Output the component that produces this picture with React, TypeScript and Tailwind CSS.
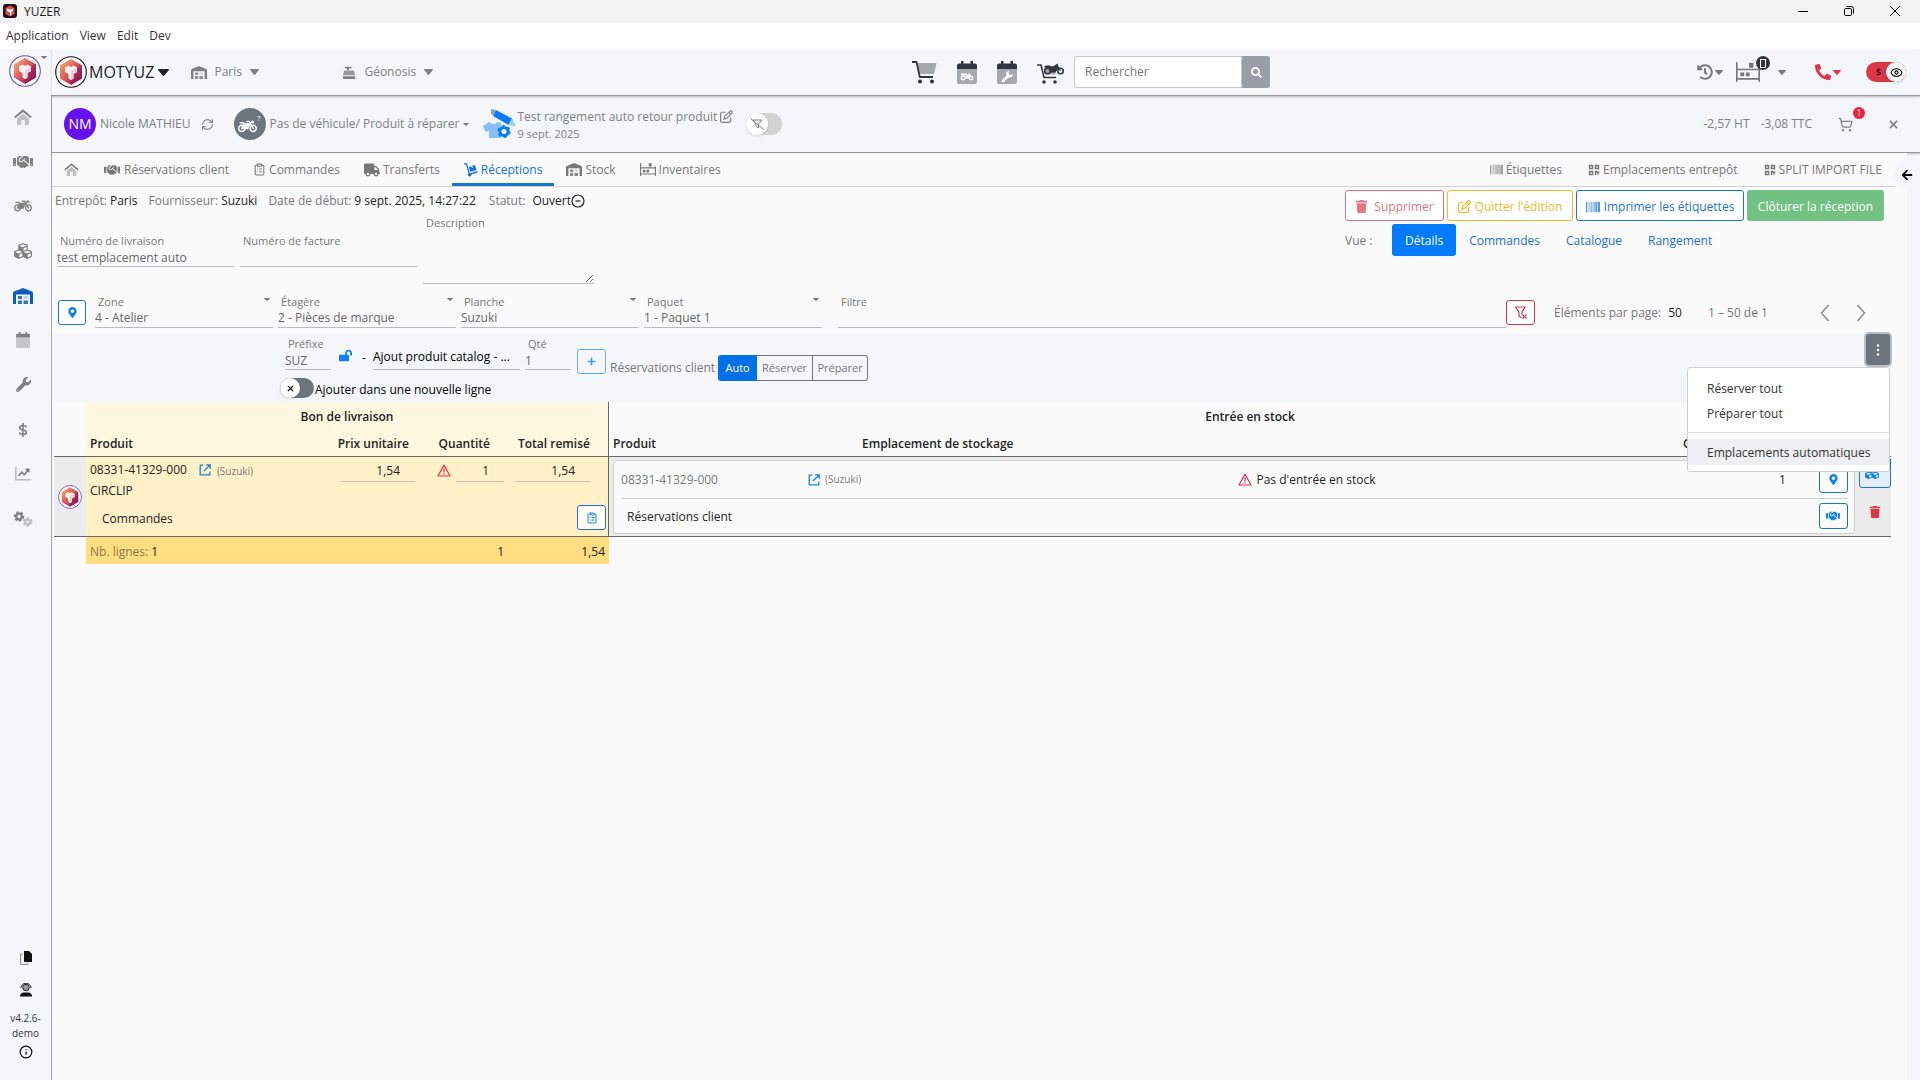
import type { ReactNode } from "react";
import {
  FaArrowLeft,
  FaBarcode,
  FaCubes,
  FaHandshake,
  FaHistory,
  FaLockOpen,
  FaMapMarkerAlt,
  FaMotorcycle,
  FaPhone,
  FaPlus,
  FaQrcode,
  FaSearch,
  FaTrash,
  FaTruck,
  FaWrench,
} from "react-icons/fa";
import { LuClipboardList, LuEye, LuInfo, LuRefreshCw, LuShoppingCart } from "react-icons/lu";
import { FaRegPenToSquare } from "react-icons/fa6";

type IconProps = { className?: string };

function Caret({ className = "w-[9px] h-[6px]" }: IconProps) {
  return (
    <svg viewBox="0 0 10 6" className={className} fill="currentColor" preserveAspectRatio="none" aria-hidden="true">
      <path d="M0.6 0h8.8c.5 0 .8.6.4 1L5.5 5.7a.7.7 0 0 1-1 0L.2 1C-.2.6.1 0 .6 0z" />
    </svg>
  );
}

function Logo({ className, ring = "#111" }: IconProps & { ring?: string }) {
  return (
    <svg viewBox="0 0 32 32" className={className} aria-hidden="true">
      <defs>
        <linearGradient id="logo-fill" x1="0.1" y1="0.1" x2="0.9" y2="0.9">
          <stop offset="0" stopColor="#f2a36b" />
          <stop offset="0.45" stopColor="#dd5a5c" />
          <stop offset="1" stopColor="#8a0f52" />
        </linearGradient>
      </defs>
      <circle cx="16" cy="16" r="15.3" fill="#fff" stroke={ring} strokeWidth="1.1" />
      <path d="M16 3l11 6.2v13.4L16 29 5 22.600V9.200z" fill="url(#logo-fill)" />
      <path d="M16 16l11-6.800v13.400L16 29z" fill="#8f1457" opacity="0.4" />
      <path d="M10 11.500l3.500-2L16 11l2.500-1.500 3.500 2v4.500l-3.500 2v4.500L16 24l-2.500-1.500V18L10 16z" fill="#fdf3f1" />
      <path d="M16 15l6-3.500v4.500l-3.500 2v4.500L16 24z" fill="#e6d3d9" />
    </svg>
  );
}

function HomeIcon({ className }: IconProps) {
  return (
    <svg viewBox="0 0 18 16" className={className} fill="currentColor" aria-hidden="true">
      <path d="M9 4.500L3 9.600V15c0 .6.300 1 .9 1h3.300v-5h3.600v5h3.300c.6 0 .9-.4.9-1V9.600z" opacity="0.45" />
      <path d="M9 0.300L.2 7.800l1.200 1.400L9 2.900l7.600 6.300 1.200-1.400z" />
    </svg>
  );
}

function WarehouseIcon({ className }: IconProps) {
  return (
    <svg viewBox="0 0 20 16" className={className} fill="currentColor" aria-hidden="true">
      <path d="M10 0L1 3.600C.4 3.900 0 4.400 0 5v11h3V6.500h14V16h3V5c0-.6-.4-1.100-1-1.400z" />
      <path d="M5 8h4v3H5zM5 12.500h4V16H5zM10.500 12.500h4.500V16h-4.500z" opacity="0.85" />
      <path d="M10.500 8H15v3h-4.500z" opacity="0.25" />
    </svg>
  );
}

function CalendarIcon({ className, children }: IconProps & { children?: ReactNode }) {
  return (
    <svg viewBox="0 0 20 23" className={className} fill="currentColor" aria-hidden="true">
      <path d="M0 8h20v13a2 2 0 0 1-2 2H2a2 2 0 0 1-2-2z" opacity="0.4" />
      <path d="M4 0h2.500v2.500h7V0H16v2.500h2a2 2 0 0 1 2 2V8H0V4.500a2 2 0 0 1 2-2h2z" />
      {children}
    </svg>
  );
}

function CartIcon({ className }: IconProps) {
  return (
    <svg viewBox="0 0 25 23" className={className} fill="currentColor" aria-hidden="true">
      <path d="M5 2h19.500l-2 9.500a2 2 0 0 1-2 1.500H7.200z" opacity="0.4" />
      <path d="M0 1h4.500l3.300 15H21" fill="none" stroke="currentColor" strokeWidth="1.800" strokeLinejoin="round" />
      <circle cx="8" cy="20.500" r="2" />
      <circle cx="20" cy="20.500" r="2" />
    </svg>
  );
}

function MotoCartIcon({ className }: IconProps) {
  return (
    <svg viewBox="0 0 27 23" className={className} fill="currentColor" aria-hidden="true">
      <path d="M0 4h4l3 12.500h12" fill="none" stroke="currentColor" strokeWidth="1.600" />
      <path d="M7 5h13l-2 8.500H8z" opacity="0.4" />
      <circle cx="10.500" cy="10" r="2.800" fill="none" stroke="currentColor" strokeWidth="1.600" />
      <circle cx="23.500" cy="10" r="2.800" fill="none" stroke="currentColor" strokeWidth="1.600" />
      <path d="M7.500 5l4-.8 4 1.500 3-2 2.500-1.200v2l3 5-1 .5-2-2.500-2.500 4H13L12 7.500 8 6.500z" />
      <circle cx="7" cy="21" r="1.800" />
      <circle cx="18" cy="21" r="1.800" />
    </svg>
  );
}

function RegisterIcon({ className }: IconProps) {
  return (
    <svg viewBox="0 0 16 16" className={className} fill="currentColor" aria-hidden="true">
      <path d="M3 1h8v2H8v2H5.500V3H3z" />
      <path d="M2 5.500h12l1.500 6H.5z" opacity="0.8" />
      <path d="M.5 12.500h15V15a1 1 0 0 1-1 1h-13a1 1 0 0 1-1-1z" />
    </svg>
  );
}

function ShelfIcon({ className }: IconProps) {
  return (
    <svg viewBox="0 0 22 18" className={className} fill="currentColor" aria-hidden="true">
      <path d="M0 0h1.500v18H0zM20.500 5H22v13h-1.500z" />
      <path d="M0 6h22v1.500H0zM0 14.500h22V16H0z" />
      <path d="M4 9.500h3.500V13H4zM9 9.500h3.500V13H9zM12 .500h4V5h-4z" />
    </svg>
  );
}

function DollyIcon({ className }: IconProps) {
  return (
    <svg viewBox="0 0 16 16" className={className} fill="currentColor" aria-hidden="true">
      <path d="M0 1h3l3 11" fill="none" stroke="currentColor" strokeWidth="1.500" />
      <path d="M7.500 12.500l8-2.500" fill="none" stroke="currentColor" strokeWidth="1.500" />
      <path d="M5.500 4.500l2.800-.9.700 2.200 1.200-.4-.6-2.200L12.300 2l2 6L7.300 10z" />
      <circle cx="6.500" cy="13.500" r="2" />
    </svg>
  );
}

function ShirtIcon({ className }: IconProps) {
  return (
    <svg viewBox="0 0 34 30" className={className} aria-hidden="true">
      <path d="M6 13l-6 4 2.500 6 3.500-1.500V29h12V14l-3-1c-2 2.500-6 2.500-9 0z" fill="#86bdfb" />
      <path d="M8 0l5 1-3 5.500L8 5z" fill="#8fa0b5" />
      <path d="M13 1l16 8.500-3.500 6.500-15.500-9z" fill="#0a7bff" />
      <path d="M29 9.500l4 8-7-1.500z" fill="#9bc9fd" />
      <circle cx="21" cy="22.500" r="4" fill="#fff" stroke="#0a7bff" strokeWidth="3" />
      <circle cx="21" cy="22.500" r="5.600" fill="none" stroke="#0a7bff" strokeWidth="2" strokeDasharray="2.930 2.930" />
    </svg>
  );
}

function ExternalIcon({ className }: IconProps) {
  return (
    <svg viewBox="0 0 12 12" className={className} fill="none" stroke="currentColor" strokeWidth="1.300" aria-hidden="true">
      <path d="M4.500 1.200H1.200v9.600h9.600V7.500M7 .8h4.200V5M11 1L5 7" />
    </svg>
  );
}

function WarningIcon({ className }: IconProps) {
  return (
    <svg viewBox="0 0 14 13" className={className} fill="none" stroke="#dc3545" strokeWidth="1.200" aria-hidden="true">
      <path d="M7 1.100L13 12H1z" strokeLinejoin="round" />
      <path d="M7 4.500v4M7 9.500v1.200" />
    </svg>
  );
}

function ChartIcon({ className }: IconProps) {
  return (
    <svg viewBox="0 0 16 14" className={className} fill="none" stroke="currentColor" aria-hidden="true">
      <path d="M.8 0v12.700H16" strokeWidth="1.500" opacity="0.5" />
      <path d="M3.500 9l3.300-4 2.400 2.700L13 3M10.500 2.300h3.200v3" strokeWidth="1.700" />
    </svg>
  );
}

function Gear({ cx, cy, r, opacity }: { cx: number; cy: number; r: number; opacity: number }) {
  return (
    <g fill="none" stroke="currentColor" opacity={opacity}>
      <circle cx={cx} cy={cy} r={r} strokeWidth="2.400" />
      <circle cx={cx} cy={cy} r={r + 1.500} strokeWidth="1.800" strokeDasharray="2.200 2.200" />
    </g>
  );
}

function GearsIcon({ className }: IconProps) {
  return (
    <svg viewBox="0 0 20 16" className={className} aria-hidden="true">
      <Gear cx={6} cy={5.500} r={2.900} opacity={1} />
      <Gear cx={14.500} cy={11} r={2.500} opacity={0.45} />
    </svg>
  );
}

function FilterOffIcon({ className }: IconProps) {
  return (
    <svg viewBox="0 0 14 14" className={className} fill="none" stroke="currentColor" strokeWidth="1.200" aria-hidden="true">
      <path d="M1.500 1H11L8 6v2.500M7.500 12L5 10V6L1.500 1M8.500 8.500l4 4M12.500 8.500l-4 4" />
    </svg>
  );
}

const sideLinks: { label: string; icon: ReactNode; active?: boolean }[] = [
  { label: "Accueil", icon: <HomeIcon className="w-[18px] h-4" /> },
  { label: "Clients", icon: <FaHandshake className="size-5" /> },
  { label: "Véhicules", icon: <FaMotorcycle className="size-[18px]" /> },
  { label: "Produits", icon: <FaCubes className="size-[18px]" /> },
  { label: "Entrepôt", icon: <WarehouseIcon className="w-5 h-4" />, active: true },
  { label: "Agenda", icon: <CalendarIcon className="w-[14px] h-4" /> },
  { label: "Atelier", icon: <FaWrench className="size-[15px]" /> },
  {
    label: "Comptabilité",
    icon: (
      <svg viewBox="0 0 10 16" className="w-[10px] h-[14px]" fill="none" stroke="currentColor" strokeWidth="1.800" aria-hidden="true">
        <path d="M5 0v16M9 5C8.500 3.500 7 2.800 5 2.800S1.300 3.700 1.300 5.300 2.800 7.600 5 8s3.900 1 3.900 2.700S7 13.200 5 13.200 1.300 12.300 1 10.700" />
      </svg>
    ),
  },
  { label: "Statistiques", icon: <ChartIcon className="w-4 h-[14px]" /> },
  { label: "Paramètres", icon: <GearsIcon className="w-5 h-4" /> },
];

function TitleBar() {
  return (
    <header>
      <div className="flex h-[23px] items-center bg-[#f3f3f3] pb-[2px] pl-[3px] pr-[19px] text-[#1b1b1b]">
        <svg viewBox="0 0 14 14" className="size-[14px]" aria-hidden="true">
          <rect width="14" height="14" rx="3" fill="#221022" />
          <path d="M7 1.500l4.500 2.600v5.800L7 12.500 2.500 9.900V4.100z" fill="#e0503f" />
          <path d="M4 4.500l3 1.200 3-1.200v2.300L8.300 8v3L7 11.700V8.500L4 6.800z" fill="#fff" />
        </svg>
        <span className="ml-[7px] pt-[2px] text-xs">YUZER</span>
        <div className="ml-auto flex items-center gap-[34px] text-black">
          <button type="button" aria-label="Réduire">
            <svg viewBox="0 0 12 12" className="size-3" stroke="currentColor" fill="none">
              <path d="M1 6.500h10" />
            </svg>
          </button>
          <button type="button" aria-label="Restaurer">
            <svg viewBox="0 0 12 12" className="size-3" stroke="currentColor" fill="none">
              <rect x="1.500" y="3.500" width="7" height="7" rx="1" />
              <path d="M3.500 1.500h5a2 2 0 0 1 2 2v5" />
            </svg>
          </button>
          <button type="button" aria-label="Fermer">
            <svg viewBox="0 0 12 12" className="size-3" stroke="currentColor" fill="none">
              <path d="M1 1l10 10M11 1L1 11" />
            </svg>
          </button>
        </div>
      </div>
      <nav className="flex h-[26px] items-center gap-[11px] bg-white pl-[6px] text-xs text-[#333]">
        <button type="button">Application</button>
        <button type="button">View</button>
        <button type="button">Edit</button>
        <button type="button">Dev</button>
      </nav>
    </header>
  );
}

function Sidebar() {
  return (
    <aside className="flex w-[52px] shrink-0 flex-col">
      <div className="flex h-[46px] pl-[9px] pt-[6px]">
        <button type="button" aria-label="Compte" className="flex items-start">
          <Logo className="size-8" ring="#6a4bb5" />
          <Caret className="w-[6px] h-[3px] mt-px text-[#777]" />
        </button>
      </div>
      <div className="flex flex-1 flex-col justify-between border-r border-[#a8a8a8]">
        <nav className="flex h-[440px] flex-col justify-between pr-[5px] pt-[6px] text-[#808080]">
          {sideLinks.map((link) => (
            <a
              key={link.label}
              href="#"
              aria-label={link.label}
              className={link.active ? "flex h-8 items-center justify-center text-[#0a5cc0]" : "flex h-8 items-center justify-center"}
            >
              {link.icon}
            </a>
          ))}
        </nav>
        <div className="flex flex-col items-center pb-[21px] text-center text-[10px] leading-[15px] text-[#333]">
          <svg viewBox="0 0 12 14" className="w-3 h-[14px] mb-[18px]" aria-hidden="true">
            <path d="M3 3H.6v10.400h7.200V12" fill="none" stroke="#888" />
            <path d="M4 0h5l3 3v8H4z" fill="#111" />
          </svg>
          <svg viewBox="0 0 12 14" className="w-3 h-[14px] mb-[14px]" aria-hidden="true">
            <circle cx="6" cy="4.500" r="3.300" fill="#999" stroke="#222" />
            <path d="M1 5a5 4.800 0 0 1 10 0" fill="none" stroke="#222" />
            <path d="M0 13.500c0-3 2-4 3.500-4h5c1.500 0 3.500 1 3.500 4z" fill="#111" />
          </svg>
          <span>
            v4.2.6-
            <br />
            demo
          </span>
          <LuInfo className="size-[14px] mt-1 text-black" />
        </div>
      </div>
    </aside>
  );
}

function TopBar() {
  return (
    <div className="flex h-[47px] items-center border-b border-[#999] pl-[3px] pr-[14px] shadow-[0_1px_2px_rgba(0,0,0,0.25)]">
      <button type="button" className="flex items-center text-[#222]">
        <Logo className="size-8" />
        <span className="ml-[2px] text-base">MOTYUZ</span>
        <Caret className="w-[11px] h-[7px] ml-1" />
      </button>
      <button type="button" className="ml-[22px] flex w-[151px] items-center text-xs text-[#808080]">
        <WarehouseIcon className="w-4 h-[13px]" />
        <span className="ml-[7px] mr-2">Paris</span>
        <Caret />
      </button>
      <button type="button" className="flex items-center text-xs text-[#808080]">
        <RegisterIcon className="w-[14px] h-[13px]" />
        <span className="ml-2 mr-2">Géonosis</span>
        <Caret />
      </button>

      <div className="ml-auto flex items-center gap-5 pl-[52px] text-[#2f3640]">
        <button type="button" aria-label="Ventes">
          <CartIcon className="w-[25px] h-[23px]" />
        </button>
        <button type="button" aria-label="Agenda véhicules">
          <CalendarIcon className="w-5 h-[23px]">
            <g fill="none" stroke="#fff" strokeWidth="1.300">
              <circle cx="6" cy="17" r="1.800" />
              <circle cx="14" cy="17" r="1.800" />
              <path d="M4 13.500h5l2 2h2l-1-3M7 16.500h5" strokeWidth="2" />
            </g>
          </CalendarIcon>
        </button>
        <button type="button" aria-label="Agenda atelier">
          <CalendarIcon className="w-5 h-[23px]">
            <path d="M6 20l5-5" stroke="#fff" strokeWidth="2.600" strokeLinecap="round" />
            <path d="M15.800 13a3.300 3.300 0 1 1-3.500-3L11.500 12l.5 1.500 1.500.5z" fill="#fff" />
          </CalendarIcon>
        </button>
        <button type="button" aria-label="Vente véhicule">
          <MotoCartIcon className="w-[27px] h-[23px]" />
        </button>
      </div>
      <form className="ml-[10px] flex h-8 w-[196px]">
        <input
          type="search"
          aria-label="Rechercher"
          placeholder="Rechercher"
          className="w-full min-w-0 rounded-l-[3px] border border-[#c4c8cc] bg-white px-[10px] text-xs placeholder:text-[#777]"
        />
        <button type="button" aria-label="Lancer la recherche" className="flex w-7 shrink-0 items-center justify-center rounded-r-[3px] bg-[#999ea6] text-white">
          <FaSearch className="size-[11px]" />
        </button>
      </form>

      <div className="ml-auto flex items-center text-[#777]">
        <button type="button" aria-label="Historique" className="flex items-center gap-[2px]">
          <FaHistory className="size-4" />
          <Caret className="w-2 h-[5px]" />
        </button>
        <button type="button" aria-label="Emplacements" className="relative ml-[13px] flex items-center gap-[18px]">
          <ShelfIcon className="w-6 h-5" />
          <span className="absolute left-5 -top-[6px] flex size-[14px] items-center justify-center rounded-full bg-[#2f3640]">
            <span className="h-[9px] w-[6px] border border-white" />
          </span>
          <Caret className="w-2 h-[5px]" />
        </button>
        <button type="button" aria-label="Appels" className="ml-[29px] flex items-center gap-[2px] text-[#dc3545]">
          <FaPhone className="size-4 -scale-x-100" />
          <Caret className="w-2 h-[5px]" />
        </button>
        <button type="button" aria-label="Afficher les prix" className="ml-[25px] flex h-5 w-10 items-center justify-between rounded-full bg-[#dc3545] pl-[10px] text-[9px] text-black">
          $
          <span className="flex size-5 items-center justify-center rounded-full bg-white shadow">
            <LuEye className="size-[13px]" />
          </span>
        </button>
      </div>
    </div>
  );
}

function ContextBar() {
  return (
    <div className="flex h-[57px] items-center border-b border-[#999] pl-3 pr-[22px] text-xs text-[#808080] shadow-[0_1px_2px_rgba(0,0,0,0.25)]">
      <span className="flex size-8 items-center justify-center rounded-full bg-[#6610f2] text-sm text-white">NM</span>
      <span className="ml-1">Nicole MATHIEU</span>
      <button type="button" aria-label="Actualiser" className="ml-[10px]">
        <LuRefreshCw className="size-[13px]" />
      </button>
      <button type="button" className="ml-5 flex items-center">
        <span className="relative flex size-8 items-center justify-center rounded-full bg-[#6c757d] pr-1 pt-1 text-white">
          <FaMotorcycle className="size-[19px]" />
          <span className="absolute right-[5px] top-1 text-[8px] leading-3">?</span>
        </span>
        <span className="ml-1 mr-1">Pas de véhicule/ Produit à réparer</span>
        <Caret className="w-[6px] h-[3px]" />
      </button>
      <ShirtIcon className="ml-[14px] w-[34px] h-[30px]" />
      <div className="pt-px leading-[17px]">
        <div className="flex items-center gap-[3px]">
          Test rangement auto retour produit
          <FaRegPenToSquare className="size-[13px]" />
        </div>
        <div className="text-[11px]">9 sept. 2025</div>
      </div>
      <button type="button" aria-label="Filtrer" className="ml-[13px] flex h-[22px] w-9 items-center rounded-full bg-[#d2d2d2]">
        <span className="flex size-[22px] items-center justify-center rounded-full bg-white shadow">
          <svg viewBox="0 0 14 12" className="w-[14px] h-3" fill="none" stroke="currentColor" aria-hidden="true">
            <path d="M3 2h9L8.500 6v4L6 8V6L3 2M.5.500l13 11" />
          </svg>
        </span>
      </button>
      <span className="ml-auto">-2,57 HT</span>
      <span className="ml-[11px]">-3,08 TTC</span>
      <button type="button" aria-label="Panier" className="relative ml-[26px]">
        <LuShoppingCart className="size-[15px]" />
        <span className="absolute -right-3 -top-[10px] flex size-3 items-center justify-center rounded-full bg-[#f02040] text-[9px] text-white">1</span>
      </button>
      <button type="button" aria-label="Fermer" className="ml-9">
        <svg viewBox="0 0 10 10" className="size-[9px]" stroke="currentColor" strokeWidth="1.800">
          <path d="M1 1l8 8M9 1L1 9" />
        </svg>
      </button>
    </div>
  );
}

const tabs: { label: string; icon: ReactNode; active?: boolean }[] = [
  { label: "Réservations client", icon: <FaHandshake className="size-4 mr-px" /> },
  { label: "Commandes", icon: <LuClipboardList className="size-[13px]" /> },
  { label: "Transferts", icon: <FaTruck className="size-4" /> },
  { label: "Réceptions", icon: <DollyIcon className="size-[14px]" />, active: true },
  { label: "Stock", icon: <WarehouseIcon className="w-4 h-[13px]" /> },
  { label: "Inventaires", icon: <ShelfIcon className="w-4 h-[13px]" /> },
];

const toolLinks = [
  { label: "Étiquettes", icon: <FaBarcode className="size-[13px]" /> },
  { label: "Emplacements entrepôt", icon: <FaQrcode className="size-3" /> },
  { label: "SPLIT IMPORT FILE", icon: <FaQrcode className="size-3" /> },
];

function Tabs() {
  return (
    <nav className="mr-3 flex h-[34px] border-b border-[#d0d3d6] text-xs text-[#777]">
      <a href="#" aria-label="Accueil" className="flex items-center pl-3 pr-[13px]">
        <HomeIcon className="w-[15px] h-[13px]" />
      </a>
      {tabs.map((tab) => (
        <a
          key={tab.label}
          href="#"
          className={
            tab.active
              ? "flex items-center gap-[3px] border-b-[3px] border-[#1976d2] px-3 pt-[3px] text-[#1070e0]"
              : "flex items-center gap-[3px] px-3"
          }
        >
          {tab.icon}
          {tab.label}
        </a>
      ))}
      <div className="ml-auto flex">
        {toolLinks.map((link) => (
          <a key={link.label} href="#" className="flex items-center gap-[3px] px-[13px]">
            {link.icon}
            {link.label}
          </a>
        ))}
      </div>
    </nav>
  );
}

const fieldLine = "block h-[18px] w-full border-b border-[#b9bcc0] bg-transparent pb-px text-xs text-[#666]";

function TextField({ id, label, value, className }: { id: string; label: string; value?: string; className: string }) {
  return (
    <div className={className}>
      <label htmlFor={id} className="block h-[17px] pl-[3px] text-[11px] leading-[17px] text-[#777]">
        {label}
      </label>
      <input id={id} type="text" defaultValue={value} className={fieldLine} />
    </div>
  );
}

function SelectField({ id, label, value }: { id: string; label: string; value: string }) {
  return (
    <div className="w-[178px]">
      <div className="flex h-[17px] justify-between pl-[3px] pr-[3px] text-[#777]">
        <label htmlFor={id} className="text-[11px] leading-[17px]">
          {label}
        </label>
        <Caret className="w-[6px] h-[3px] mt-[5px]" />
      </div>
      <select id={id} defaultValue={value} className={`${fieldLine} appearance-none`}>
        <option>{value}</option>
      </select>
    </div>
  );
}

function ReceptionHeader() {
  return (
    <section className="flex justify-between">
      <div>
        <dl className="flex h-[26px] items-center pl-px pt-px text-xs text-[#777]">
          <dt>Entrepôt:</dt>
          <dd className="ml-[3px] mr-[11px] text-[#222]">Paris</dd>
          <dt>Fournisseur:</dt>
          <dd className="ml-[3px] mr-[11px] text-[#222]">Suzuki</dd>
          <dt>Date de début:</dt>
          <dd className="ml-[3px] mr-[13px] text-[#222]">9 sept. 2025, 14:27:22</dd>
          <dt>Statut:</dt>
          <dd className="ml-[7px] flex items-center text-[#222]">
            Ouvert
            <svg viewBox="0 0 14 14" className="size-[14px]" fill="none" stroke="currentColor" strokeWidth="1.200" aria-hidden="true">
              <circle cx="7" cy="7" r="6" />
              <path d="M4.500 7h5" />
            </svg>
          </dd>
        </dl>
        <div className="flex gap-[6px] pl-[3px]">
          <TextField id="livraison" label="Numéro de livraison" value="test emplacement auto" className="mt-[19px] w-[177px]" />
          <TextField id="facture" label="Numéro de facture" className="mt-[19px] w-[177px]" />
          <div className="w-[171px]">
            <label htmlFor="description" className="block h-[18px] pl-[3px] text-[11px] leading-5 text-[#777]">
              Description
            </label>
            <textarea id="description" className="block h-[53px] w-full resize border-b border-[#b9bcc0] bg-transparent text-xs" />
          </div>
        </div>
      </div>

      <div className="w-[546px] pt-[3px] text-xs">
        <div className="flex gap-[3px] *:pt-[2px]">
          <button type="button" className="flex h-[31px] w-[99px] items-center justify-center gap-[6px] rounded-[3px] border border-[#e0707c] bg-white text-[#e27782]">
            <FaTrash className="size-[13px]" />
            Supprimer
          </button>
          <button type="button" className="flex h-[31px] w-[126px] items-center justify-center gap-1 rounded-[3px] border border-[#f5bd2a] bg-white text-[#eebb35]">
            <FaRegPenToSquare className="size-[13px]" />
            Quitter l'édition
          </button>
          <button type="button" className="flex h-[31px] w-[168px] items-center justify-center gap-1 rounded-[3px] border border-[#1b75d0] bg-white text-[#1b75d0]">
            <FaBarcode className="size-[14px]" />
            Imprimer les étiquettes
          </button>
          <button type="button" className="flex h-[31px] w-[137px] items-center justify-center rounded-[3px] bg-[#72c283] text-white">
            Clôturer la réception
          </button>
        </div>
        <nav className="mt-[3px] flex items-center text-[#1b70d0] *:flex *:h-8 *:items-center *:pt-[2px]">
          <span className="w-[47px] text-[#777]">Vue :</span>
          <a href="#" className="rounded-[3px] bg-[#007bff] px-[13px] text-white">
            Détails
          </a>
          <a href="#" className="px-[13px]">
            Commandes
          </a>
          <a href="#" className="px-[13px]">
            Catalogue
          </a>
          <a href="#" className="px-[13px]">
            Rangement
          </a>
        </nav>
      </div>
    </section>
  );
}

const outlineButton = "flex items-center justify-center rounded-[3px] border border-[#1b75d0] text-[#1080f5]";

function LocationFilters() {
  return (
    <section className="flex items-end pb-[6px] pl-1 pt-[9px] text-xs text-[#777]">
      <button type="button" aria-label="Emplacement" className={`${outlineButton} mb-[3px] h-[25px] w-7 bg-white`}>
        <FaMapMarkerAlt className="size-[11px]" />
      </button>
      <div className="ml-[9px] flex gap-[5px]">
        <SelectField id="zone" label="Zone" value="4 - Atelier" />
        <SelectField id="etagere" label="Étagère" value="2 - Pièces de marque" />
        <SelectField id="planche" label="Planche" value="Suzuki" />
        <SelectField id="paquet" label="Paquet" value="1 - Paquet 1" />
      </div>
      <TextField id="filtre" label="Filtre" className="ml-4 min-w-0 flex-1" />
      <button type="button" aria-label="Effacer le filtre" className="mb-[3px] flex h-[25px] w-[29px] items-center justify-center rounded-[3px] border border-[#dc3545] bg-white text-[#dc3545]">
        <FilterOffIcon className="size-[14px]" />
      </button>
      <div className="flex h-[30px] w-[356px] items-center pl-[19px]">
        <span>Éléments par page:</span>
        <span className="ml-[7px] text-[#222]">50</span>
        <span className="ml-[26px]">1 – 50 de 1</span>
        <div className="ml-auto mr-[25px] flex gap-[26px] text-[#888]">
          <button type="button" aria-label="Page précédente">
            <svg viewBox="0 0 10 18" className="w-[10px] h-[18px]" fill="none" stroke="currentColor" strokeWidth="1.500">
              <path d="M8.500 1l-7 8 7 8" />
            </svg>
          </button>
          <button type="button" aria-label="Page suivante">
            <svg viewBox="0 0 10 18" className="w-[10px] h-[18px]" fill="none" stroke="currentColor" strokeWidth="1.500">
              <path d="M1.500 1l7 8-7 8" />
            </svg>
          </button>
        </div>
      </div>
    </section>
  );
}

function ActionMenu() {
  return (
    <div className="relative ml-auto self-start">
      <button type="button" aria-label="Actions" className="mr-px flex h-[31px] w-6 items-center justify-center rounded-[3px] bg-[#6c757d] text-white ring-2 ring-[#b9bec3]">
        <svg viewBox="0 0 4 14" className="w-1 h-[14px]" fill="currentColor">
          <circle cx="2" cy="2.500" r="1.200" />
          <circle cx="2" cy="7" r="1.200" />
          <circle cx="2" cy="11.500" r="1.200" />
        </svg>
      </button>
      <div role="menu" className="absolute right-px top-[33px] z-10 w-[203px] rounded-[3px] border border-[#cfcfcf] bg-white pb-[6px] pt-2 text-xs whitespace-nowrap text-[#333] *:px-[19px]">
        <button type="button" role="menuitem" className="block h-[25px] w-full text-left">
          Réserver tout
        </button>
        <button type="button" role="menuitem" className="block h-[25px] w-full text-left">
          Préparer tout
        </button>
        <hr className="my-[6px] border-[#dedede]" />
        <button type="button" role="menuitem" className="block h-[26px] w-full bg-[#eeeff1] pt-px text-left">
          Emplacements automatiques
        </button>
      </div>
    </div>
  );
}

function AddBar() {
  return (
    <section className="flex h-[68px] items-center bg-[#f4f6f9] pl-[231px] text-xs text-[#777]">
      <div className="w-[321px] self-start">
        <div className="flex h-9 items-end">
          <TextField id="prefixe" label="Préfixe" value="SUZ" className="w-[46px]" />
          <FaLockOpen className="mb-2 ml-2 size-[13px] text-[#1080f5]" />
          <span className="mb-1 ml-[10px] w-[11px] text-black">-</span>
          <input aria-label="Produit catalogue" type="text" defaultValue="Ajout produit catalog - ..." className="h-6 w-[147px] border-b border-[#b9bcc0] bg-transparent pb-[2px] text-black" />
          <TextField id="qte" label="Qté" value="1" className="ml-[5px] w-[46px]" />
          <button type="button" aria-label="Ajouter" className="mb-[-4px] ml-[6px] flex h-[25px] w-[29px] items-center justify-center rounded-[3px] border border-[#6aa9ea] text-[#4d9bee]">
            <FaPlus className="size-[9px]" />
          </button>
        </div>
        <label className="mt-2 flex h-5 items-center text-black">
          <input type="checkbox" className="peer sr-only" />
          <span className="-ml-[5px] flex h-5 w-[34px] items-center rounded-full bg-[#6c757d]">
            <span className="flex size-5 items-center justify-center rounded-full bg-white shadow">
              <svg viewBox="0 0 8 8" className="size-[7px]" stroke="currentColor" strokeWidth="1.500">
                <path d="M1 1l6 6M7 1L1 7" />
              </svg>
            </span>
          </span>
          <span className="ml-px pt-1">Ajouter dans une nouvelle ligne</span>
        </label>
      </div>
      <span className="ml-1 mr-[3px]">Réservations client</span>
      <div className="flex h-[26px] text-[11px]">
        <button type="button" className="w-[39px] rounded-l-[3px] bg-[#0070e8] text-white">
          Auto
        </button>
        <button type="button" className="w-14 border-y border-r border-[#6c757d]">
          Réserver
        </button>
        <button type="button" className="w-[55px] rounded-r-[3px] border-y border-r border-[#6c757d]">
          Préparer
        </button>
      </div>
      <ActionMenu />
    </section>
  );
}

const priceInput = "h-[23px] border-b border-[#c9c3ae] bg-transparent pr-[15px] text-right";

function ReceptionTable() {
  return (
    <table className="w-full table-fixed border-separate border-spacing-0 text-xs text-[#222]">
      <colgroup>
        <col className="w-8" />
        <col className="w-[240px]" />
        <col className="w-[100px]" />
        <col className="w-[90px]" />
        <col className="w-[93px]" />
        <col className="w-[249px]" />
        <col />
        <col className="w-[176px]" />
        <col className="w-9" />
      </colgroup>
      <thead className="text-left whitespace-nowrap">
        <tr className="h-[27px] *:pt-[3px] *:font-semibold">
          <th />
          <th colSpan={4} className="border-r border-[#666] bg-[#fff8e1] text-center">
            Bon de livraison
          </th>
          <th colSpan={4} className="text-center">
            Entrée en stock
          </th>
        </tr>
        <tr className="h-7 *:border-b *:border-[#666] *:pt-[2px] *:font-semibold">
          <th />
          <th className="bg-[#fff8e1] pl-1">Produit</th>
          <th className="bg-[#fff8e1] pr-[17px] text-right">Prix unitaire</th>
          <th className="bg-[#fff8e1] pr-[26px] text-right">Quantité</th>
          <th className="border-r bg-[#fff8e1] pl-[2px]">Total remisé</th>
          <th className="pl-1">Produit</th>
          <th className="pl-1">Emplacement de stockage</th>
          <th className="pl-1">Quantité</th>
          <th />
        </tr>
      </thead>
      <tbody>
        <tr className="h-11">
          <td rowSpan={2} className="border-b border-[#666] bg-[#ececec]">
            <Logo className="mx-auto size-6" ring="#6a4bb5" />
          </td>
          <td className="bg-[#fff0c8] pl-1 align-top leading-[21px]">
            <div className="flex items-center pt-[2px]">
              08331-41329-000
              <a href="#" aria-label="Ouvrir la fiche produit" className="ml-3 mr-[6px] text-[#1b80e0]">
                <ExternalIcon className="size-3" />
              </a>
              <span className="pt-[3px] text-[10px] leading-[18px] text-[#777]">(Suzuki)</span>
            </div>
            CIRCLIP
          </td>
          <td className="bg-[#fff0c8] pr-[11px] text-right align-top">
            <input aria-label="Prix unitaire" defaultValue="1,54" className={`${priceInput} mt-[2px] w-[74px]`} />
          </td>
          <td className="bg-[#fff0c8] align-top">
            <div className="mt-[2px] flex items-center justify-end pr-3">
              <WarningIcon className="mr-[5px] w-[14px] h-[13px]" />
              <input aria-label="Quantité" defaultValue="1" className={`${priceInput} w-12`} />
            </div>
          </td>
          <td className="border-r border-[#666] bg-[#fff0c8] pr-[18px] text-right align-top">
            <input aria-label="Total remisé" defaultValue="1,54" className={`${priceInput} mt-[2px] w-[74px]`} />
          </td>
          <td rowSpan={2} colSpan={3} className="border-b border-[#666] bg-[#ececec] pb-[2px] pl-1 pt-[3px]">
            <div className="rounded-[3px] border border-[#d0d0d0] bg-[#fbfbfb] pl-[7px] pr-[6px]">
              <div className="flex h-[38px] items-center border-b border-[#ccc]">
                <div className="flex w-[241px] shrink-0 items-center whitespace-nowrap">
                  <span className="w-[187px] text-[#777]">08331-41329-000</span>
                  <a href="#" aria-label="Ouvrir la fiche produit" className="mr-[5px] text-[#1b80e0]">
                    <ExternalIcon className="size-3" />
                  </a>
                  <span className="text-[10px] text-[#777]">(Suzuki)</span>
                </div>
                <div className="flex flex-1 items-center justify-center gap-1">
                  <WarningIcon className="w-[14px] h-[13px]" />
                  Pas d'entrée en stock
                </div>
                <span className="w-[34px] text-right">1</span>
                <button type="button" aria-label="Emplacement" className={`${outlineButton} ml-[33px] h-[26px] w-[29px]`}>
                  <FaMapMarkerAlt className="size-[11px]" />
                </button>
              </div>
              <div className="flex h-[34px] items-center justify-between pl-[6px]">
                <span className="pt-[2px]">Réservations client</span>
                <button type="button" aria-label="Réservations client" className={`${outlineButton} h-[26px] w-[29px]`}>
                  <FaHandshake className="size-[14px]" />
                </button>
              </div>
            </div>
          </td>
          <td rowSpan={2} className="border-b border-[#666] bg-[#ececec] pl-1 align-top">
            <button type="button" aria-label="Répartir" className={`${outlineButton} h-[31px] w-8 bg-[#e4effa] pr-[6px]`}>
              <FaCubes className="size-[14px]" />
            </button>
            <button type="button" aria-label="Supprimer la ligne" className="mt-[18px] flex w-8 justify-center text-[#dc3545]">
              <FaTrash className="size-3" />
            </button>
          </td>
        </tr>
        <tr className="h-9">
          <td colSpan={4} className="border-b border-r border-[#666] bg-[#fff0c8] pb-[2px] pl-4 pr-[2px]">
            <div className="flex items-center justify-between">
              <span className="pt-[2px]">Commandes</span>
              <button type="button" aria-label="Commandes" className={`${outlineButton} h-[25px] w-[29px] bg-[#fffdf5]`}>
                <LuClipboardList className="size-3" />
              </button>
            </div>
          </td>
        </tr>
      </tbody>
      <tfoot>
        <tr className="h-[27px] *:pt-[2px]">
          <td />
          <td colSpan={2} className="bg-[#ffdd80] pl-1">
            <span className="text-[#8a7a50]">Nb. lignes:</span> 1
          </td>
          <td className="bg-[#ffdd80] pr-3 text-right">1</td>
          <td className="bg-[#ffdd80] pr-1 text-right">1,54</td>
          <td colSpan={4} />
        </tr>
      </tfoot>
    </table>
  );
}

export default function App() {
  return (
    <div className="flex min-h-screen flex-col bg-[#f4f6f9] font-['Segoe_UI','Open_Sans',sans-serif]">
      <TitleBar />
      <div className="flex flex-1">
        <Sidebar />
        <div className="flex min-w-0 flex-1 flex-col">
          <TopBar />
          <ContextBar />
          <div className="relative flex flex-1">
            <div className="min-w-0 flex-1 bg-[#fafafa]">
              <Tabs />
              <main className="pl-[2px] pr-4">
                <ReceptionHeader />
                <LocationFilters />
                <AddBar />
                <ReceptionTable />
              </main>
            </div>
            <div className="w-[13px] shrink-0" />
            <button type="button" aria-label="Ouvrir le panneau" className="absolute right-0 top-[6px] flex h-8 w-[26px] items-center justify-center rounded-l-full bg-[#f4f6f9] text-black">
              <FaArrowLeft className="size-3" />
            </button>
          </div>
        </div>
      </div>
    </div>
  );
}
